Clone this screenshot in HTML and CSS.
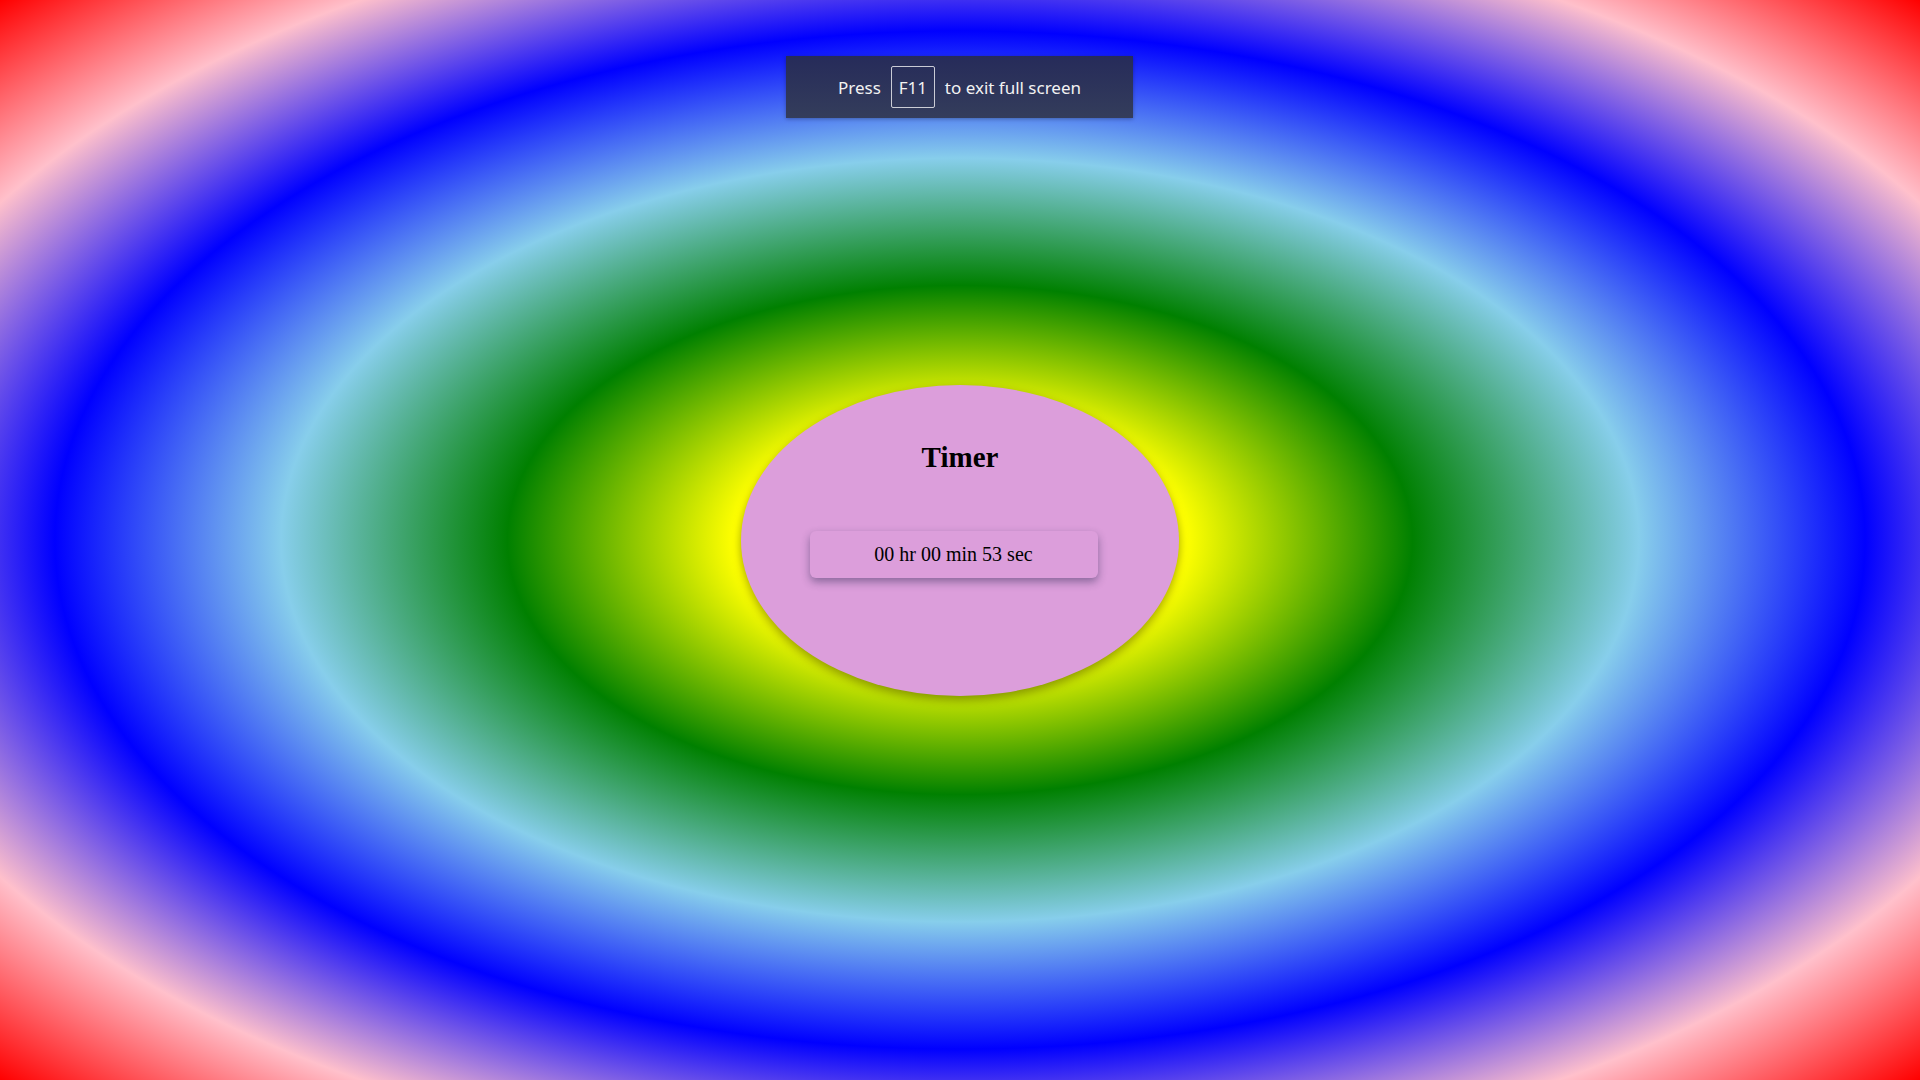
FILE: index.html
```html
<!DOCTYPE html>
<html lang="en">
<head>
<meta charset="utf-8">
<title>Timer</title>
<link rel="stylesheet" href="styles.css">
</head>
<body>
  <div class="toast">
    <span class="toast-text">Press</span>
    <span class="key">F11</span>
    <span class="toast-text">to exit full screen</span>
  </div>
  <main class="oval">
    <h1 class="title">Timer</h1>
    <div class="clock">00 hr 00 min 53 sec</div>
  </main>
</body>
</html>
```
FILE: styles.css
```css
html, body {
  margin: 0;
  padding: 0;
}
body {
  width: 100vw;
  height: 100vh;
  overflow: hidden;
  display: flex;
  align-items: center;
  justify-content: center;
  background: radial-gradient(ellipse farthest-corner at center, yellow, yellow, green, skyblue, blue, pink, red);
  font-family: "Liberation Serif", "Times New Roman", serif;
}
.oval {
  width: 438px;
  height: 311px;
  box-sizing: border-box;
  border-radius: 50%;
  background: #dc9edb;
  box-shadow: 0 4px 10px rgba(0, 0, 0, 0.35);
  display: flex;
  flex-direction: column;
  align-items: center;
  padding-top: 56px;
}
.title {
  margin: 0;
  font-size: 29px;
  font-weight: bold;
  line-height: 32px;
  color: #000;
}
.clock {
  margin-top: 58px;
  margin-right: 13px;
  width: 288px;
  box-sizing: border-box;
  padding: 12px 0;
  line-height: 23px;
  font-size: 20px;
  text-align: center;
  color: #000;
  background: #dc9edb;
  border-radius: 6px;
  box-shadow: 0 4px 9px rgba(40, 40, 80, 0.45);
}
.toast {
  position: absolute;
  top: 56px;
  left: 786px;
  width: 347px;
  height: 62px;
  box-sizing: border-box;
  display: flex;
  align-items: center;
  justify-content: center;
  gap: 10px;
  background: linear-gradient(to bottom, #262b5a, #343d5b);
  box-shadow: 0 1px 4px rgba(0, 0, 0, 0.3);
  font-family: "Noto Sans", "Open Sans", sans-serif;
  font-size: 17px;
  color: #f2f2f2;
}
.key {
  width: 44px;
  height: 42px;
  box-sizing: border-box;
  display: flex;
  align-items: center;
  justify-content: center;
  border: 1px solid rgba(255, 255, 255, 0.75);
  border-radius: 2px;
}
```
